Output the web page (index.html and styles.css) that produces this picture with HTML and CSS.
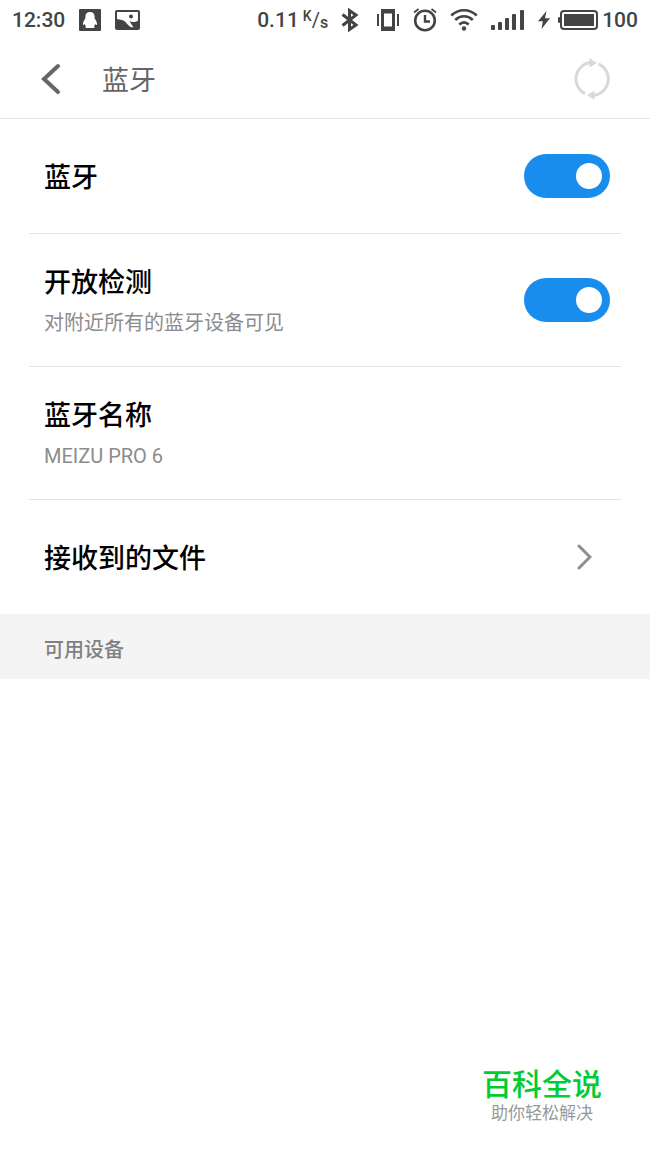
FILE: index.html
```
<!DOCTYPE html>
<html lang="zh-CN">
<head>
    <meta charset="UTF-8">
    <meta name="viewport" content="width=device-width, initial-scale=1.0">
    <title>蓝牙</title>
    <link rel="stylesheet" href="styles.css">
</head>
<body>
    <div class="status-bar">
        <div class="status-left">
            <span class="status-text">12:30</span>
            <svg width="22" height="22" viewBox="0 0 22 22">
                <rect width="22" height="22" rx="1" fill="#444"/>
                <path fill="#fff" d="M11 3C8 3 6.400 5 6.400 7.500V9.200C5.200 11 4 13 4 15c0 1.300.8 1.200 1.700.1.300 1 .8 1.700 1.300 2.200-.8.400-1 1.700.3 1.700H14.700c1.300 0 1.100-1.300.3-1.700.5-.5 1-1.200 1.300-2.200.9 1.100 1.700 1.200 1.700-.1 0-2-1.200-4-2.400-5.800V7.500C15.600 5 14 3 11 3z"/>
            </svg>
            <svg width="25" height="20" viewBox="0 0 25 20">
                <rect width="25" height="20" rx="2" fill="#444"/>
                <path fill="#fff" d="M2 2h21v8.500c-3 2-6 1.800-8.500.8L18.500 17.500c-4-.3-5.500-2.500-7.500-5C9 10 5.500 9.500 2 9z"/>
                <circle cx="16" cy="6.500" r="2" fill="#444"/>
            </svg>
        </div>
        <div class="status-right">
            <div class="speed">
                <span class="status-text">0.11</span>
                <span class="unit"><sup>K</sup><span>/</span><sub>s</sub></span>
            </div>
            <svg width="22" height="24" viewBox="0 0 22 24" fill="none" stroke="#444" stroke-width="3">
                <path d="M1.500 6.500 15 17 8.500 21.500V2.500L15 7 1.500 17.500"/>
            </svg>
            <svg width="24" height="22" viewBox="0 0 24 22" fill="none" stroke="#444">
                <path stroke-width="2" d="M2 5v12M22 5v12"/>
                <path fill="#444" stroke="none" fill-rule="evenodd" d="M5 0h14v22H5zM8 4.500v13h8v-13z"/>
            </svg>
            <svg width="24" height="24" viewBox="0 0 24 24" fill="none" stroke="#444">
                <circle cx="12" cy="12.500" r="9.800" stroke-width="2.600"/>
                <path stroke-width="2.400" d="M12 7v6.500h5"/>
                <path stroke-width="1.800" d="M1 4.500 5.500 1M23 4.500 18.500 1"/>
            </svg>
            <svg width="28" height="24" viewBox="0 0 28 24" fill="none" stroke="#444" stroke-width="2.600">
                <path d="M1.200 7.500c7.500-7 18.100-7 25.600 0M5.200 12c5.400-5 12.200-5 17.600 0M9.200 16.500c3-2.700 6.600-2.700 9.600 0"/>
                <circle cx="14" cy="20.500" r="2.200" fill="#444" stroke="none"/>
            </svg>
            <svg width="34" height="22" viewBox="0 0 34 22" fill="#444">
                <rect x="0" y="16" width="4" height="5" rx="1"/>
                <rect x="7" y="13" width="4" height="8" rx="1"/>
                <rect x="14" y="9" width="4" height="12" rx="1"/>
                <rect x="21" y="5" width="4" height="16" rx="1"/>
                <rect x="29" y="1" width="4" height="20" rx="1"/>
            </svg>
            <div class="power">
                <svg width="12" height="18" viewBox="0 0 12 18" fill="#444">
                    <path d="M8.500 0 0 10.200h4.800L3.500 18 12 7.200H7z"/>
                </svg>
                <svg class="battery" width="40" height="22" viewBox="0 0 40 22">
                    <rect x="3" y="2" width="36" height="18" rx="3" fill="none" stroke="#444" stroke-width="2"/>
                    <rect x="6" y="5" width="30" height="12" fill="#444"/>
                    <rect x="0" y="8" width="2" height="6" rx="1" fill="#444"/>
                </svg>
                <span class="status-text">100</span>
            </div>
        </div>
    </div>

    <header class="header">
        <button class="icon-button" aria-label="返回">
            <svg width="22" height="32" viewBox="0 0 22 32" fill="none" stroke="#666" stroke-width="4" stroke-linecap="round">
                <path d="M18 3 4 16l14 13"/>
            </svg>
        </button>
        <h1 class="header-title">蓝牙</h1>
        <button class="icon-button refresh" aria-label="刷新">
            <svg width="36" height="42" viewBox="0 0 36 42" fill="none" stroke="#d9d9d9" stroke-width="3">
                <path d="M11 35.700A16.500 16.500 0 0 1 16.500 4.600M24.500 5.900A16.500 16.500 0 0 1 19.500 37.400"/>
                <path fill="#d9d9d9" stroke="none" d="M15.500 0v9.500L23 5zM20.500 32.500V42L13 37z"/>
            </svg>
        </button>
    </header>

    <main class="list">
        <div class="row">
            <label class="row-title" for="bluetooth">蓝牙</label>
            <input class="switch" type="checkbox" id="bluetooth" checked>
        </div>
        <div class="row tall">
            <div class="row-text">
                <label class="row-title" for="visible">开放检测</label>
                <p class="row-info">对附近所有的蓝牙设备可见</p>
            </div>
            <input class="switch" type="checkbox" id="visible" checked>
        </div>
        <div class="row tall">
            <div class="row-text">
                <h2 class="row-title">蓝牙名称</h2>
                <p class="row-info">MEIZU PRO 6</p>
            </div>
        </div>
        <a class="row" href="#">
            <span class="row-title">接收到的文件</span>
            <svg class="arrow" width="16" height="26" viewBox="0 0 16 26" fill="none" stroke="#8e8e8e" stroke-width="3" stroke-linecap="round">
                <path d="M3 2 14 13 3 24"/>
            </svg>
        </a>
    </main>

    <h2 class="section-title">可用设备</h2>

    <footer class="brand">
        <p class="brand-name">百科全说</p>
        <p class="brand-slogan">助你轻松解决</p>
    </footer>
</body>
</html>
```
FILE: styles.css
```
* {
    box-sizing: border-box;
    margin: 0;
    padding: 0;
}
body {
    display: flex;
    flex-direction: column;
    min-height: 100vh;
    background: #fff;
    color: #000;
    font-family: Roboto, "Noto Sans CJK SC", sans-serif;
}
svg {
    display: block;
    flex: none;
}

/* status bar */
.status-bar {
    display: flex;
    justify-content: space-between;
    height: 40px;
    padding: 0 12px;
    color: #444;
}
.status-left, .status-right, .speed, .power {
    display: flex;
    align-items: center;
}
.status-left {
    gap: 14px;
}
.status-right {
    gap: 13px;
}
.speed, .power {
    gap: 4px;
}
.battery {
    margin-left: 4px;
}
.status-text {
    font-size: 21px;
    font-weight: 500;
    line-height: 40px;
}
.unit {
    display: flex;
    align-items: center;
    font-size: 20px;
    line-height: 24px;
}
.unit sup {
    padding-bottom: 8px;
    font-size: 14px;
    font-weight: 500;
    line-height: 16px;
}
.unit sub {
    padding-top: 6px;
    font-size: 16px;
    font-weight: 500;
    line-height: 18px;
}

/* header */
.header {
    display: flex;
    align-items: center;
    height: 79px;
    padding: 0 40px;
    border-bottom: 1px solid #e2e2e2;
}
.icon-button {
    border: none;
    background: none;
    cursor: pointer;
}
.header-title {
    margin-left: 40px;
    padding-top: 4px;
    color: #666;
    font-size: 27px;
    font-weight: 400;
    line-height: 40px;
}
.refresh {
    margin-left: auto;
}

/* settings */
.list {
    padding: 0 29px;
}
.row {
    display: flex;
    align-items: center;
    justify-content: space-between;
    min-height: 115px;
    padding: 0 11px 0 15px;
    border-bottom: 1px solid #e2e2e2;
    color: #000;
    text-decoration: none;
}
.row.tall {
    min-height: 133px;
}
.row:last-child {
    min-height: 114px;
    border-bottom: none;
}
.row-text {
    padding-top: 2px;
}
.row-title {
    display: block;
    padding-top: 4px;
    font-size: 27px;
    font-weight: 500;
    line-height: 40px;
}
.row-info {
    color: #8c8c8c;
    font-size: 20px;
    font-weight: 400;
    line-height: 40px;
}
.switch {
    appearance: none;
    display: flex;
    align-items: center;
    width: 86px;
    height: 44px;
    padding: 0 8px;
    border-radius: 22px;
    background: #ccc;
    cursor: pointer;
}
.switch:checked {
    justify-content: flex-end;
    background: #198ded;
}
.switch::before {
    content: "";
    width: 26px;
    height: 26px;
    border-radius: 50%;
    background: #fff;
}
.arrow {
    margin-right: 18px;
}
.section-title {
    padding: 8px 44px 0;
    background: #f4f4f4;
    color: #808080;
    font-size: 20px;
    font-weight: 500;
    line-height: 57px;
}

/* brand */
.brand {
    align-self: flex-end;
    margin-top: auto;
    padding: 0 48px 30px;
    text-align: center;
}
.brand-name {
    color: #0c3;
    font-size: 30px;
    font-weight: 500;
    line-height: 32px;
}
.brand-slogan {
    color: #999;
    font-size: 17px;
    line-height: 24px;
}
```
